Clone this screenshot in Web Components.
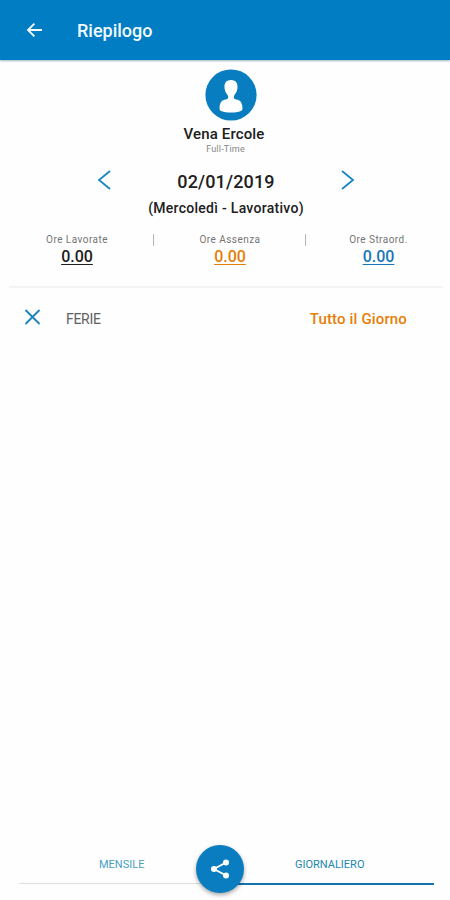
<!DOCTYPE html>
<html lang="it">
<head>
<meta charset="utf-8">
<title>Riepilogo</title>
<style>
  body {
    margin: 0;
    background: #fefefe;
    font-family: Roboto, "Liberation Sans", sans-serif;
    color: #202020;
  }
</style>
</head>
<body>
<daily-page>
  <app-header slot="header" text="Riepilogo"></app-header>
  <user-card name="Vena Ercole" contract="Full-Time"></user-card>
  <date-picker date="02/01/2019" day="(Mercoledì - Lavorativo)"></date-picker>
  <hours-summary>
    <hours-item label="Ore Lavorate" value="0.00"></hours-item>
    <hours-item label="Ore Assenza" value="0.00" style="--value-color: #e67e08"></hours-item>
    <hours-item label="Ore Straord." value="0.00" style="--value-color: #1878b5"></hours-item>
  </hours-summary>
  <absence-row><span slot="type">FERIE</span>Tutto il Giorno</absence-row>
  <tab-bar slot="footer">
    <tab-item>MENSILE</tab-item>
    <share-button slot="action"></share-button>
    <tab-item slot="right" active>GIORNALIERO</tab-item>
  </tab-bar>
</daily-page>

<script>
function define(name, html, setup) {
  const template = document.createElement('template');
  template.innerHTML = html;

  window.customElements.define(name, class extends HTMLElement {
    constructor() {
      super();
      this.attachShadow({ mode: 'open' });
      this.shadowRoot.appendChild(template.content.cloneNode(true));
      if (setup) setup(this, this.shadowRoot);
    }
  });
}

define('daily-page', `
  <style>
    :host{
      display: flex;
      flex-direction: column;
      height: 900px;
      overflow: hidden;
    }
    main{
      flex: 1;
    }
  </style>
  <slot name="header"></slot>
  <main><slot></slot></main>
  <slot name="footer"></slot>
`);

define('app-header', `
  <style>
    :host{
      display: flex;
      align-items: center;
      height: 60px;
      background: #007dc3;
      color: #f2fbff;
      box-shadow: 0 1px 2px rgba(0, 70, 110, 0.4);
    }
    svg{
      margin-left: 26px;
      width: 17px;
      height: 16px;
    }
    h1{
      margin: 1px 0 0 34px;
      font-size: 18px;
      line-height: 24px;
      font-weight: 500;
    }
  </style>
  <svg viewBox="0 0 17 16" fill="none" stroke="currentColor" stroke-width="1.9">
    <path d="M16 8H2.500M8.400 1.600L2 8l6.400 6.400"/>
  </svg>
  <h1></h1>
`, (el, root) => {
  root.querySelector('h1').textContent = el.getAttribute('text');
});

define('user-card', `
  <style>
    :host{
      display: flex;
      flex-direction: column;
      align-items: center;
      padding: 9px 2px 0 0;
      height: 100px;
      box-sizing: border-box;
    }
    svg{
      width: 52px;
      height: 52px;
      margin-left: 14px;
    }
    .name{
      margin-top: 4px;
      font-size: 15px;
      line-height: 18px;
      font-weight: 500;
      letter-spacing: 0.15px;
    }
    .contract{
      padding-left: 3px;
      font-size: 9px;
      line-height: 12px;
      color: #858585;
      letter-spacing: 0.2px;
    }
  </style>
  <svg viewBox="0 0 52 52">
    <circle cx="26" cy="26" r="25.6" fill="#087dc0"/>
    <path fill="#fff" d="M26 11c4.400 0 6.800 2.800 6.500 7.300-.1 3-.9 5.200-2.700 7.100l-1 1.800c0 2.400.7 2.900 2.500 3.300 3.700.7 5.600 2.400 6.100 7.300.2 2.700 0 3.700-1.600 4.300-5 2-14.600 2-19.600 0-1.600-.6-1.800-1.600-1.600-4.300.5-4.900 2.400-6.600 6.100-7.300 1.800-.4 2.500-.9 2.500-3.300l-1-1.800c-1.800-1.900-2.600-4.100-2.700-7.100C19.200 13.800 21.600 11 26 11z"/>
  </svg>
  <div class="name"></div>
  <div class="contract"></div>
`, (el, root) => {
  root.querySelector('.name').textContent = el.getAttribute('name');
  root.querySelector('.contract').textContent = el.getAttribute('contract');
});

define('date-picker', `
  <style>
    :host{
      display: block;
      height: 73px;
      padding-top: 9px;
      box-sizing: border-box;
      text-align: center;
    }
    .row{
      display: flex;
      justify-content: space-between;
      align-items: center;
      height: 24px;
      padding: 0 95px 0 97px;
    }
    svg{
      width: 14px;
      height: 20px;
      margin-bottom: 2px;
      fill: none;
      stroke: #1687c4;
      stroke-width: 1.8;
    }
    .date{
      font-size: 18px;
      font-weight: 500;
      letter-spacing: 0.15px;
    }
    .day{
      margin-top: 6px;
      padding-left: 2px;
      font-size: 14px;
      line-height: 18px;
      font-weight: 500;
      letter-spacing: 0.28px;
    }
  </style>
  <div class="row">
    <svg viewBox="0 0 14 20"><path d="M13 1L2 10l11 9"/></svg>
    <div class="date"></div>
    <svg viewBox="0 0 14 20"><path d="M1 1l11 9L1 19"/></svg>
  </div>
  <div class="day"></div>
`, (el, root) => {
  root.querySelector('.date').textContent = el.getAttribute('date');
  root.querySelector('.day').textContent = el.getAttribute('day');
});

define('hours-summary', `
  <style>
    :host{
      display: grid;
      grid-template-columns: 145px 152px 137px;
      width: 434px;
      height: 53px;
      margin-left: 9px;
      border-bottom: 2px solid #f3f3f3;
    }
    ::slotted(:not(:last-child)){
      background: linear-gradient(#b5b5b5, #b5b5b5) right 1px / 1px 12px no-repeat;
    }
  </style>
  <slot></slot>
`);

define('hours-item', `
  <style>
    :host{
      display: flex;
      flex-direction: column;
      align-items: center;
    }
    :host(:first-child){
      padding-right: 9px;
    }
    :host(:last-child){
      padding-left: 8px;
    }
    .label{
      font-size: 10px;
      line-height: 14px;
      color: #757575;
      letter-spacing: 0.45px;
    }
    .value{
      font-size: 16px;
      line-height: 19px;
      font-weight: 500;
      color: var(--value-color, #202020);
      text-decoration: underline;
      text-decoration-thickness: 1px;
      text-underline-offset: 2px;
    }
  </style>
  <div class="label"></div>
  <div class="value"></div>
`, (el, root) => {
  root.querySelector('.label').textContent = el.getAttribute('label');
  root.querySelector('.value').textContent = el.getAttribute('value');
});

define('absence-row', `
  <style>
    :host{
      display: flex;
      align-items: center;
      height: 61px;
      padding: 0 43px 0 24px;
      font-size: 15px;
      font-weight: 500;
      letter-spacing: 0.15px;
      color: #e67e08;
    }
    svg{
      width: 17px;
      height: 16px;
      margin-bottom: 3px;
    }
    .type{
      flex: 1;
      margin-left: 25px;
      font-size: 14px;
      font-weight: 400;
      letter-spacing: -0.3px;
      color: #606060;
    }
  </style>
  <svg viewBox="0 0 17 16" fill="none" stroke="#1783bd" stroke-width="1.8">
    <path d="M1.500 1l14 14M15.500 1l-14 14"/>
  </svg>
  <div class="type"><slot name="type"></slot></div>
  <slot></slot>
`);

define('tab-bar', `
  <style>
    :host{
      display: grid;
      grid-template-columns: 201px 214px;
      height: 60px;
      padding: 0 16px 0 19px;
      position: relative;
    }
    .action{
      position: absolute;
      left: 196px;
      top: 5px;
    }
  </style>
  <slot></slot>
  <slot name="right"></slot>
  <div class="action"><slot name="action"></slot></div>
`);

define('tab-item', `
  <style>
    :host{
      display: block;
      box-sizing: border-box;
      height: 44px;
      padding-left: 80px;
      border-bottom: 1px solid #dedede;
      font-size: 11px;
      line-height: 49px;
      color: #4a9fbe;
    }
    :host([active]){
      height: 45px;
      padding-left: 75px;
      border-bottom: 2px solid #1474b0;
      color: #2387ac;
    }
  </style>
  <slot></slot>
`);

define('share-button', `
  <style>
    :host{
      display: block;
      width: 48px;
      height: 48px;
      border-radius: 50%;
      background: #0a7dc1;
      box-shadow: 0 2px 4px rgba(0, 0, 0, 0.35);
    }
    svg{
      display: block;
      width: 48px;
      height: 48px;
    }
  </style>
  <svg viewBox="0 0 48 48" fill="#fff">
    <path d="M30 17.500L18 24l12 6.500" fill="none" stroke="#fff" stroke-width="1.9"/>
    <circle cx="18" cy="24" r="3"/>
    <circle cx="30" cy="17.500" r="3"/>
    <circle cx="30" cy="30.500" r="3"/>
  </svg>
`);
</script>
</body>
</html>
